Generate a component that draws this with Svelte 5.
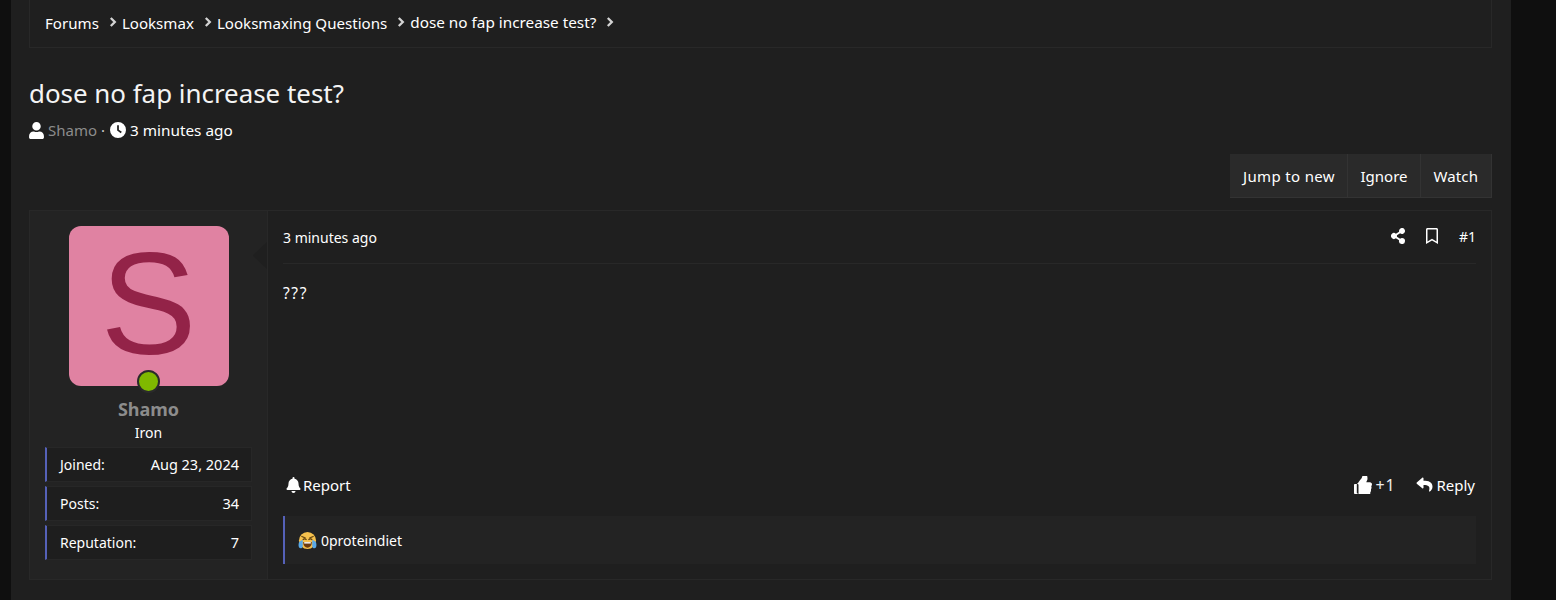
<script>
  const crumbs = ['Forums', 'Looksmax', 'Looksmaxing Questions'];
  const stats = [['Joined:', 'Aug 23, 2024'], ['Posts:', '34'], ['Reputation:', '7']];
  const buttons = ['Jump to new', 'Ignore', 'Watch'];
</script>

{#snippet chev()}
  <svg class="chev" viewBox="0 0 8 12" width="8" height="12"><path d="M1.800 2 5.800 6l-4 4" fill="none" stroke="#d4d4d4" stroke-width="2.300"/></svg>
{/snippet}

<div class="page">
  <div class="wrap">
    <nav class="crumbs">
      {#each crumbs as c}
        <span class="crumb">{c}</span>{@render chev()}
      {/each}
      <span class="crumb last">dose no fap increase test?</span>{@render chev()}
    </nav>

    <h1>dose no fap increase test?</h1>
    <div class="meta">
      <svg viewBox="0 0 448 512" width="15" height="17"><path fill="#fff" d="M224 256a128 128 0 1 0 0-256 128 128 0 0 0 0 256zm90 32h-17a174 174 0 0 1-146 0h-17C60 288 0 348 0 422v42c0 26 22 48 48 48h352c26 0 48-22 48-48v-42c0-74-60-134-134-134z"/></svg>
      <span class="muted">Shamo</span>
      <span class="dot">·</span>
      <svg class="clock" viewBox="0 0 512 512" width="16" height="16"><path fill="#fff" d="M256 0a256 256 0 1 0 0 512 256 256 0 0 0 0-512zm-28 104h56v142l94 68-33 45-117-85z"/></svg>
      <span class="ago">3 minutes ago</span>
    </div>

    <div class="actions">
      <div class="btns">
        {#each buttons as b}<span class="btn">{b}</span>{/each}
      </div>
    </div>

    <article class="post">
      <aside class="user">
        <div class="avatar">
          <span class="letter">S</span>
          <span class="online"></span>
        </div>
        <div class="name">Shamo</div>
        <div class="rank">Iron</div>
        <div class="stats">
          {#each stats as [k, v]}
            <div class="stat"><span>{k}</span><span class="val">{v}</span></div>
          {/each}
        </div>
      </aside>
      <div class="main">
        <span class="arrow"></span>
        <header class="attr">
          <span class="time">3 minutes ago</span>
          <div class="tools">
            <svg viewBox="0 0 448 512" width="14" height="16"><path fill="#fff" d="M352 320c-22.600 0-43.400 7.800-59.800 20.900l-102.500-64.100a96.600 96.600 0 0 0 0-41.700l102.500-64.100A96 96 0 1 0 256 96c0 7.200.8 14.100 2.300 20.900l-102.500 64.100a96 96 0 1 0 0 150l102.500 64.100A96 96 0 1 0 352 320z"/></svg>
            <svg class="bm" viewBox="0 0 384 512" width="12" height="16"><path fill="#fff" d="M336 0H48C21.500 0 0 21.500 0 48v464l192-112 192 112V48c0-26.500-21.500-48-48-48zm0 428-144-84-144 84V54a6 6 0 0 1 6-6h276a6 6 0 0 1 6 6z"/></svg>
            <span class="num">#1</span>
          </div>
        </header>
        <div class="body">???</div>
        <footer class="foot">
          <span class="link">
            <svg viewBox="0 0 448 512" width="15" height="16"><path fill="#fff" d="M224 512c35 0 64-29 64-64H160c0 35 29 64 64 64zm216-150c-19-21-56-52-56-154 0-78-54-140-128-155V32a32 32 0 0 0-64 0v21C118 68 64 130 64 208c0 102-37 133-56 154-6 6-8 14-8 22 0 16 13 32 32 32h384c19 0 32-16 32-32 0-8-2-16-8-22z"/></svg>
            Report
          </span>
          <div class="right">
            <span class="link like">
              <svg viewBox="0 0 512 512" width="18" height="18"><path fill="#fff" d="M104 224H24c-13 0-24 11-24 24v240c0 13 11 24 24 24h80c13 0 24-11 24-24V248c0-13-11-24-24-24zM384 81c0 42-26 66-33 95h102c33 0 59 28 59 60 0 19-8 40-21 53 12 28 10 66-10 92 10 30 0 66-19 86 5 21 3 38-8 52-25 36-88 37-141 37h-4c-60 0-109-22-148-39-20-9-46-20-66-20-8 0-15-7-15-15V242c0-4 2-8 5-11 53-52 75-107 119-151 20-20 27-50 34-80 6-25 19-79 46-79 32 0 100 11 100 160z"/></svg>
              <span class="plus">+1</span>
            </span>
            <span class="link reply">
              <svg viewBox="0 0 512 512" width="17" height="16"><path fill="#fff" d="M8 175 184 23c15-13 40-3 40 18v80c161 2 288 34 288 187 0 62-40 123-84 155-14 10-33-3-28-19 46-146-22-185-176-187v88c0 21-24 32-40 18L8 212c-11-10-11-27 0-37z"/></svg>
              Reply
            </span>
          </div>
        </footer>
        <div class="reactions">
          <svg viewBox="0 0 20 20" width="19" height="19">
            <circle cx="10" cy="10" r="9" fill="#f6c14d"/>
            <path d="M3.500 5.500 8 7.500M16.500 5.500 12 7.500" stroke="#6b4a12" stroke-width="1.300" fill="none"/>
            <path d="M5 9.200q2-1.800 4 0M11 9.200q2-1.800 4 0" stroke="#5b3d0c" stroke-width="1.300" fill="none"/>
            <path d="M5.500 11.500h9c0 3.800-2 6-4.500 6s-4.500-2.200-4.500-6z" fill="#6b3a10"/>
            <path d="M6.500 11.700h7v1.500h-7z" fill="#fff"/>
            <path d="M1 12c1-1 3-2.500 4-2.500v7c-1 2-3 2-4 .5-.6-1.500-.5-3.500 0-5zM19 12c-1-1-3-2.500-4-2.500v7c1 2 3 2 4 .5.600-1.500.500-3.500 0-5z" fill="#5aa9e6"/>
          </svg>
          <span>0proteindiet</span>
        </div>
      </div>
    </article>
  </div>
</div>

<style>
  :global(body) { margin: 0; background: #0f0f0f; }
  .page {
    height: 600px;
    overflow: hidden;
    padding-left: 11px;
    font-family: "Noto Sans", "Open Sans", sans-serif;
    color: #fff;
    font-size: 14px;
    background: #0f0f0f;
  }
  .wrap {
    width: 1500px;
    height: 600px;
    box-sizing: border-box;
    padding: 0 19px 0 18px;
    background: #1f1f1f;
  }
  .crumbs {
    display: flex;
    align-items: center;
    height: 48px;
    box-sizing: border-box;
    padding: 0 15px 1px 15px;
    border: 1px solid #282828;
    border-top: 0;
    font-size: 15.100px;
    line-height: 20px;
  }
  .crumb { position: relative; }
  .chev { margin: -2px 5px 0 10px; flex: none; }
  .crumb.last { top: -1px; font-size: 15.300px; }
  h1 {
    margin: 25px 0 0;
    font-size: 25.900px;
    font-weight: 400;
    line-height: 40px;
    color: #f4f4f4;
  }
  .meta {
    display: flex;
    align-items: center;
    height: 24px;
    margin-top: 5px;
    font-size: 15px;
    gap: 4px;
  }
  .muted { color: #8c8c8c; }
  .dot { color: #ccc; }
  .clock { margin-left: 1px; }
  .ago { font-size: 15.300px; }
  .actions { display: flex; justify-content: flex-end; margin-top: 12px; }
  .btns {
    display: flex;
    height: 44px;
    background: #2a2a2a;
    border-bottom: 1px solid #333;
    border-right: 1px solid #333;
    box-sizing: border-box;
  }
  .btn {
    display: flex;
    align-items: center;
    padding: 0 12.500px;
    border-left: 1px solid #333;
    font-size: 15px;
  }
  .btn:first-child { border-left: 0; letter-spacing: .36px; padding-right: 12px; }
  .btn:last-child { padding-right: 13px; letter-spacing: .1px; }
  .post {
    display: flex;
    height: 370px;
    box-sizing: border-box;
    margin-top: 12px;
    border: 1px solid #282828;
  }
  .user {
    width: 238px;
    flex: none;
    box-sizing: border-box;
    padding: 15px 15px 0;
    background: #232323;
    border-right: 1px solid #282828;
    display: flex;
    flex-direction: column;
    align-items: center;
  }
  .avatar {
    position: relative;
    width: 160px;
    height: 160px;
    flex: none;
    border-radius: 12px;
    background: #e082a2;
    display: flex;
    align-items: center;
    justify-content: center;
  }
  .letter {
    font-family: "Liberation Sans", Arial, sans-serif;
    font-size: 144px;
    line-height: 160px;
    color: #932348;
    transform: translateY(-1px);
  }
  .online {
    position: absolute;
    left: 68px;
    bottom: -7px;
    width: 19px;
    height: 19px;
    border-radius: 50%;
    background: #7fb900;
    border: 2px solid #2a2a2a;
  }
  .name {
    margin-top: 11px;
    font-size: 18px;
    line-height: 24px;
    font-weight: 700;
    color: #8c8c8c;
  }
  .rank { font-size: 14px; line-height: 22px; margin-top: 1px; }
  .stats { width: 207px; margin-top: 3px; display: flex; flex-direction: column; gap: 4px; }
  .stat {
    display: flex;
    justify-content: space-between;
    align-items: center;
    height: 35px;
    box-sizing: border-box;
    padding: 0 12px 1px 13px;
    background: #1e1e1e;
    border: 1px solid #272727;
    border-left: 2px solid #5561b8;
    font-size: 14px;
  }
  .val { font-size: 14.500px; }
  .main {
    position: relative;
    flex: 1;
    min-width: 0;
    padding: 0 15px 15px;
    display: flex;
    flex-direction: column;
  }
  .arrow {
    position: absolute;
    left: -15px;
    top: 31px;
    width: 14px;
    height: 27px;
    background: #1f1f1f;
    clip-path: polygon(100% 0, 0 50%, 100% 100%);
  }
  .attr {
    display: flex;
    justify-content: space-between;
    align-items: center;
    height: 53px;
    box-sizing: border-box;
    border-bottom: 1px solid #282828;
  }
  .time { font-size: 14px; }
  .tools { display: flex; align-items: center; font-size: 14px; position: relative; top: -1px; }
  .bm { margin-left: 21px; }
  .num { margin-left: 21px; }
  .body { margin-top: 17px; font-size: 15.500px; line-height: 24px; letter-spacing: 1.600px; }
  .foot {
    margin-top: auto;
    display: flex;
    justify-content: space-between;
    align-items: center;
    height: 24px;
    font-size: 15px;
  }
  .link { display: flex; align-items: center; gap: 2px; padding-left: 3px; }
  .right { display: flex; align-items: center; gap: 18px; padding-right: 1px; }
  .like { gap: 4px; }
  .plus { font-size: 16px; color: #ececec; letter-spacing: .8px; }
  .reply { gap: 3px; }
  .reactions {
    margin-top: 19px;
    display: flex;
    align-items: center;
    gap: 4px;
    height: 48px;
    box-sizing: border-box;
    padding-left: 13px;
    background: #232323;
    border-left: 2px solid #5561b8;
    font-size: 14px;
  }
</style>
